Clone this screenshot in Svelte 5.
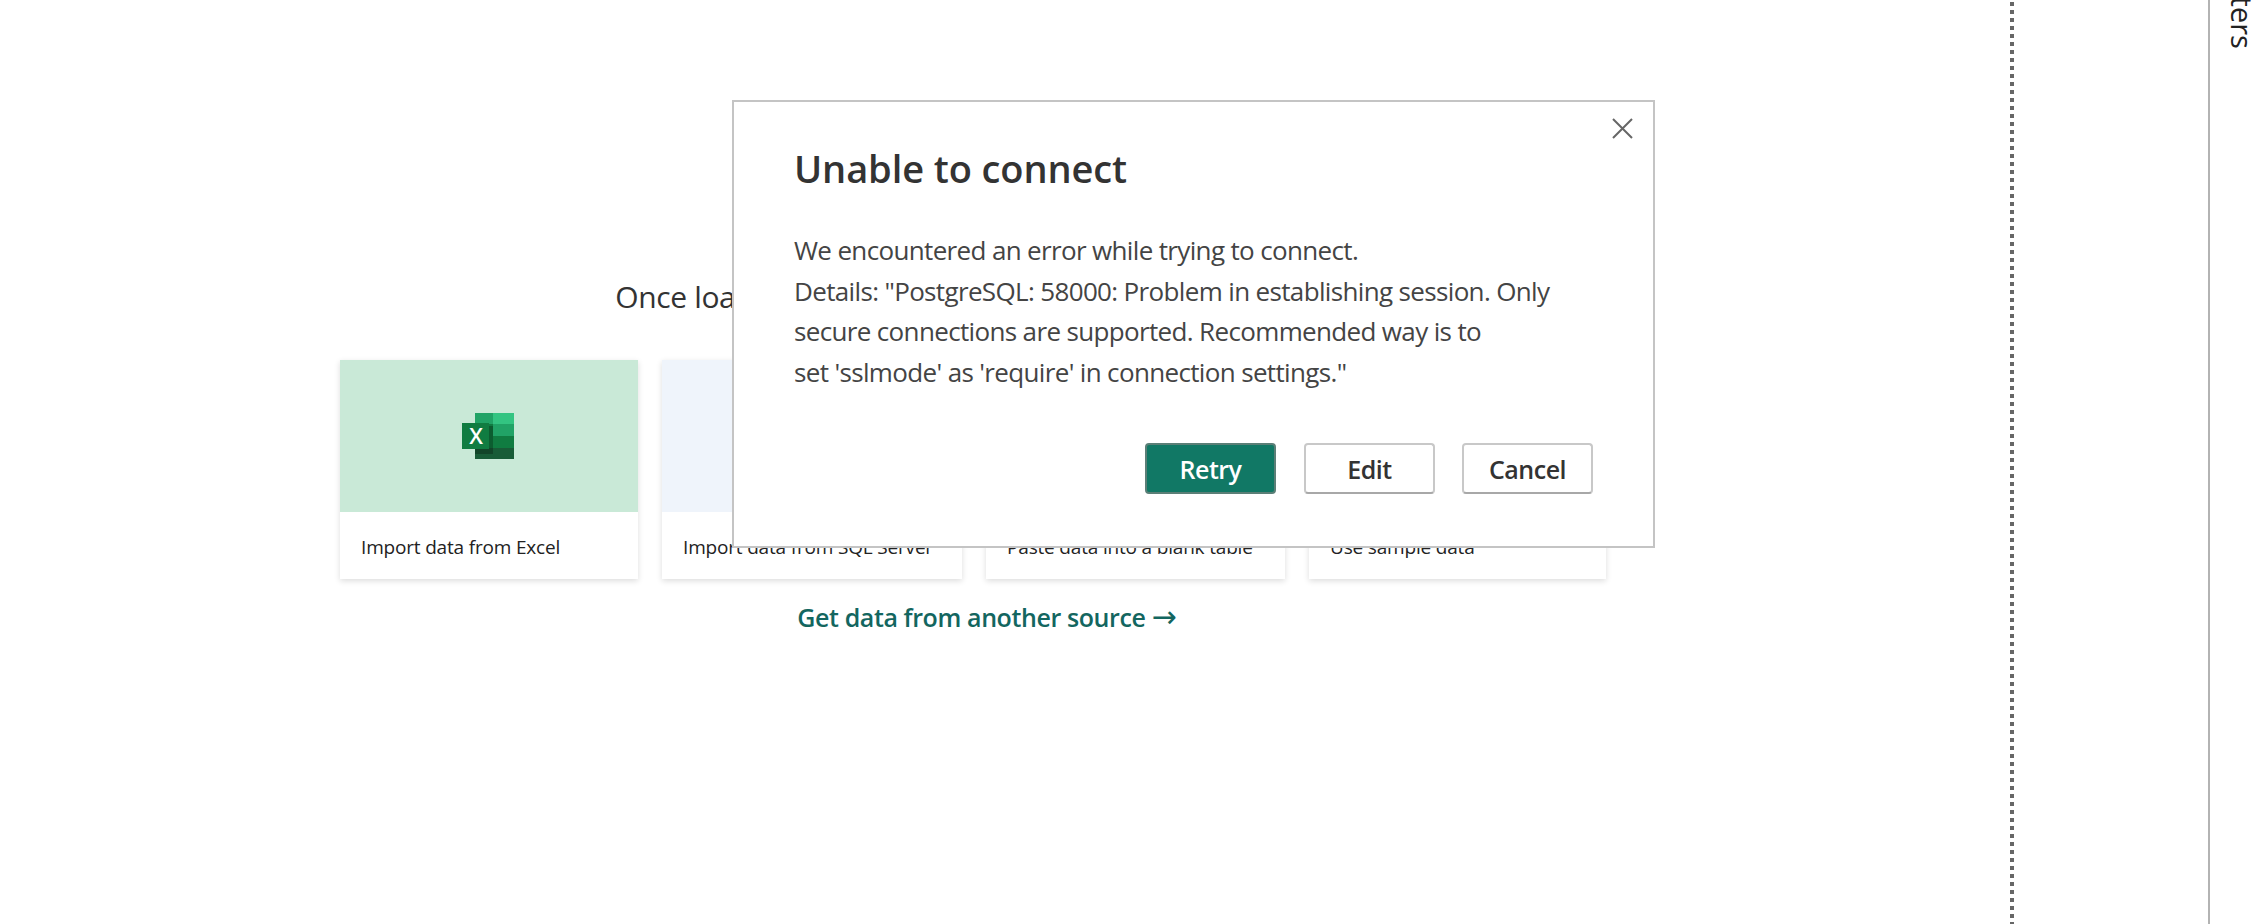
<script lang="ts">
  const cards = [
    { label: "Import data from Excel", tint: "green", icon: true },
    { label: "Import data from SQL Server", tint: "blue", icon: false },
    { label: "Paste data into a blank table", tint: "blue", icon: false },
    { label: "Use sample data", tint: "blue", icon: false },
  ];
</script>

<div class="page">
  <main class="canvas">
    <div class="start">
      <p class="hint">Once loaded, your data will appear in the Data pane.</p>
      <div class="cards">
        {#each cards as card}
          <div class="card">
            <div class="thumb {card.tint}">
              {#if card.icon}
                <svg width="52" height="46" viewBox="0 0 52 46">
                  <rect x="13" y="0" width="18" height="11" fill="#21a366" />
                  <rect x="31" y="0" width="21" height="11" fill="#33c481" />
                  <rect x="13" y="11" width="18" height="24" fill="#107c41" />
                  <rect x="31" y="11" width="21" height="12" fill="#21a366" />
                  <rect x="31" y="23" width="21" height="12" fill="#107c41" />
                  <rect x="13" y="35" width="39" height="11" fill="#185c37" />
                  <rect x="13" y="13" width="18" height="28" fill="#000" opacity="0.25" />
                  <rect x="0" y="10" width="27" height="26" fill="#107c41" />
                  <text x="14" y="31" class="x-mark">X</text>
                </svg>
              {/if}
            </div>
            <div class="label">{card.label}</div>
          </div>
        {/each}
      </div>
      <div class="more">Get data from another source <span class="arrow">→</span></div>
    </div>
  </main>
  <div class="dots"></div>
  <div class="gutter"></div>
  <div class="rule"></div>
  <aside class="side">
    <div class="side-title"><span>Filters</span></div>
  </aside>

  <div class="dialog" role="dialog">
    <button class="close" aria-label="Close">
      <svg width="21" height="21" viewBox="0 0 21 21">
        <path d="M1 1 L20 20 M20 1 L1 20" stroke="#666" stroke-width="2" fill="none" />
      </svg>
    </button>
    <h2>Unable to connect</h2>
    <p class="message">
      We encountered an error while trying to connect.<br />
      Details: "PostgreSQL: 58000: Problem in establishing session. Only<br />
      secure connections are supported. Recommended way is to<br />
      set 'sslmode' as 'require' in connection settings."
    </p>
    <div class="actions">
      <button class="btn primary">Retry</button>
      <button class="btn">Edit</button>
      <button class="btn">Cancel</button>
    </div>
  </div>
</div>

<style>
  :global(body) {
    margin: 0;
    background: #fff;
    font-family: "Open Sans", "Noto Sans", sans-serif;
  }

  .page {
    position: relative;
    display: flex;
    height: 924px;
    overflow: hidden;
    background: #fff;
  }

  .canvas {
    flex: none;
    width: 2010px;
    padding-left: 340px;
    box-sizing: border-box;
  }

  .start {
    width: 1266px;
    display: flex;
    flex-direction: column;
    align-items: center;
    padding-top: 274px;
  }

  .hint {
    margin: 0;
    height: 86px;
    font-size: 30px;
    line-height: 46px;
    letter-spacing: -0.35px;
    color: #333;
  }

  .cards {
    display: grid;
    grid-template-columns: 298px 300px 299px 297px;
    gap: 24px;
    width: 100%;
  }

  .card {
    height: 219px;
    background: #fff;
    box-shadow: 0 2px 6px rgba(0, 0, 0, 0.14);
  }

  .thumb {
    height: 152px;
    display: flex;
    align-items: center;
    justify-content: center;
  }

  .thumb svg { margin-right: 2px; }

  .thumb.green { background: #c9e9d7; }
  .thumb.blue { background: #eff4fb; }

  .x-mark {
    font-family: "Open Sans", sans-serif;
    font-size: 22px;
    font-weight: 600;
    fill: #fff;
    text-anchor: middle;
  }

  .label {
    padding: 21px 21px 0;
    font-size: 19px;
    line-height: 28px;
    letter-spacing: -0.18px;
    color: #222;
  }

  .more {
    margin-top: 21px;
    padding-left: 28px;
    font-size: 25px;
    line-height: 34px;
    font-weight: 600;
    letter-spacing: -0.4px;
    color: #13665f;
  }

  .arrow {
    font-family: "DejaVu Sans", sans-serif;
    font-size: 30px;
    font-weight: 400;
    letter-spacing: 0;
  }

  .dots {
    flex: none;
    width: 4px;
    background: repeating-linear-gradient(to bottom, transparent 0 2px, #666 2px 6px, transparent 6px 8px);
  }

  .gutter {
    flex: none;
    width: 194px;
  }

  .rule {
    flex: none;
    width: 2px;
    background: #b3b3b3;
  }

  .side {
    flex: 1;
    padding-left: 18px;
  }

  .side-title {
    height: 49px;
    display: flex;
    flex-direction: column;
    justify-content: flex-end;
    overflow: hidden;
  }

  .side-title span {
    writing-mode: vertical-rl;
    font-size: 29px;
    line-height: 29px;
    color: #222;
  }

  .dialog {
    position: absolute;
    left: 732px;
    top: 100px;
    width: 923px;
    height: 448px;
    box-sizing: border-box;
    border: 2px solid #c4c4c4;
    background: #fff;
    padding: 41px 60px 0;
    display: flex;
    flex-direction: column;
  }

  .close {
    position: absolute;
    right: 20px;
    top: 16px;
    padding: 0;
    border: 0;
    background: none;
    line-height: 0;
  }

  h2 {
    margin: 0;
    font-size: 38px;
    line-height: 50px;
    font-weight: 600;
    letter-spacing: -0.1px;
    color: #333;
  }

  .message {
    margin: 37px 0 0;
    font-size: 26px;
    line-height: 40.5px;
    letter-spacing: -0.65px;
    color: #444;
  }

  .actions {
    margin-top: 51px;
    display: flex;
    justify-content: flex-end;
    gap: 27px;
  }

  .btn {
    width: 131px;
    height: 51px;
    border: 2px solid #c8c8c8;
    border-bottom-color: #a8a8a8;
    border-radius: 4px;
    background: #fff;
    font-family: inherit;
    font-size: 25px;
    font-weight: 600;
    letter-spacing: -0.5px;
    color: #333;
    padding: 0;
  }

  .btn.primary {
    margin-right: 1px;
    background: #117865;
    border-color: #5b7f77;
    color: #fff;
  }
</style>
